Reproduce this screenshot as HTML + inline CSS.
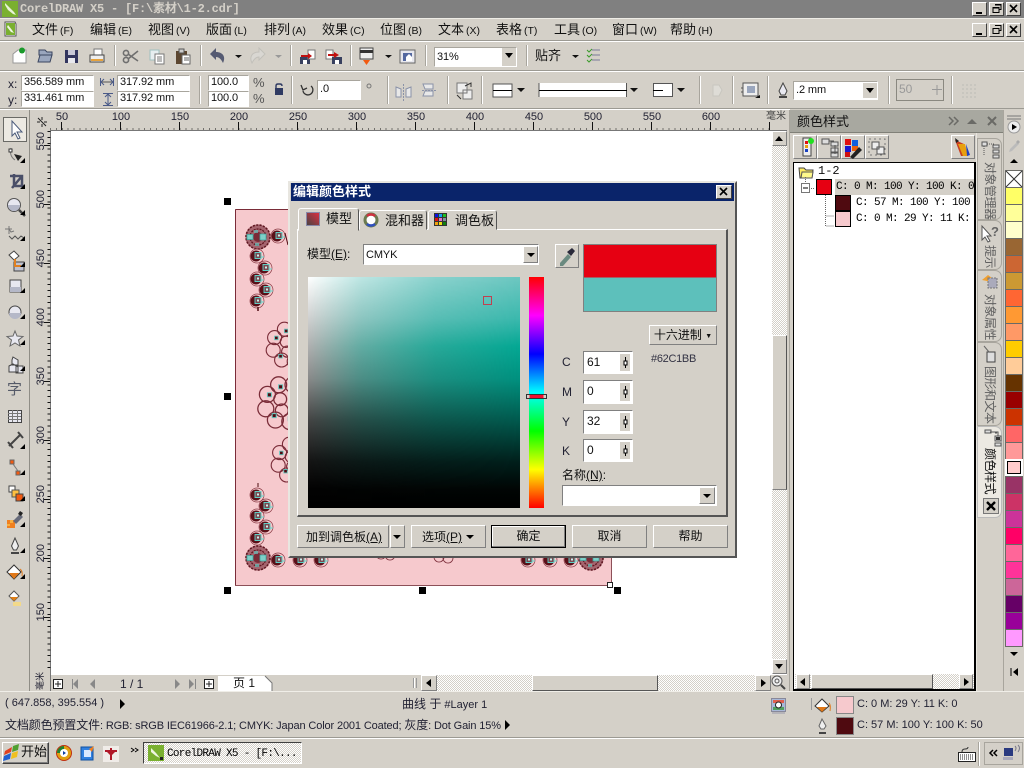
<!DOCTYPE html>
<html><head><meta charset="utf-8"><style>
html,body{margin:0;padding:0;width:1024px;height:768px;overflow:hidden;background:#d4d0c8}
body{position:relative;font-family:"Liberation Sans","Noto Sans CJK SC",sans-serif;font-size:11px;color:#111}
svg.o{position:absolute;left:0;top:0}
.t,.b,.s,.a{position:absolute;white-space:nowrap;box-sizing:border-box}
.t{line-height:1}
.m{font-size:13px;top:23px}.m i{font-style:normal;font-size:10.5px;margin-left:2px}
.b{background:#d4d0c8;border:1px solid;border-color:#fff #808080 #808080 #fff}
.s{background:#fff;border:1px solid;border-color:#a8a59d #fff #fff #a8a59d;font-size:11px;line-height:13px;padding-left:2px;letter-spacing:-.1px}
.w{position:absolute;width:15px;height:14px;background:#d4d0c8;border:1px solid;border-color:#fff #404040 #404040 #fff;box-sizing:border-box}
.d{position:absolute;background:conic-gradient(#fff 25%,#d4d0c8 0 50%,#fff 0 75%,#d4d0c8 0) 0 0/2px 2px}
.r{font-size:11px;top:112px;width:30px;text-align:center;color:#223}
.v{position:absolute;writing-mode:vertical-rl;text-orientation:sideways;font-size:11px;line-height:1;left:36px;color:#223;transform:rotate(180deg)}
.tab{position:absolute;left:977px;width:25px;border:1px solid #a8a59d;border-left-color:#a8a59d;border-radius:0 7px 7px 0;box-sizing:border-box;background:#d4d0c8}
.vt{position:absolute;left:983px;writing-mode:vertical-rl;text-orientation:sideways;font-size:12px;line-height:14px;color:#606060;letter-spacing:-.5px}
.c{font-size:11px;font-family:"Liberation Mono","Noto Sans CJK SC",monospace;letter-spacing:-.6px;color:#000}
.sb{font-size:11px;color:#223}.sb span{font-size:12px}
.n{font-size:12px;padding:4px 0 0 3px!important;border-color:#808080 #fff #fff #808080}
</style></head><body>

<div class="a" style="left:0;top:0;width:1024px;height:18px;background:#808080"></div>
<div class="t" style="left:20px;top:2px;font:bold 12px/14px 'Liberation Mono','Noto Sans CJK SC',monospace;color:#d4d0c8;letter-spacing:-.2px">CorelDRAW X5 - [F:\素材\1-2.cdr]</div>

<svg class="o" width="1024" height="768" viewBox="0 0 1024 768">
<defs>
<g id="n"><circle cx="-1" r="5.500" fill="#5a0f18"/><circle r="7" fill="none" stroke="#8a3a44" stroke-width=".7"/><path d="M-2-3.500h6v6h-6z" fill="#7a4850" stroke="#5fd0c6" stroke-width=".9"/><path d="M0-1.500h2v2H0z" fill="#c8f2ee"/><path d="M4 1h3" stroke="#62d8cc"/></g>
<g id="f"><circle r="12.500" fill="#a5646e"/><circle r="12" fill="none" stroke="#5f1620" stroke-width="1.600" stroke-dasharray="2 1.400"/><circle r="8" fill="none" stroke="#5f1620" stroke-width="1.300" stroke-dasharray="2 1"/><circle r="5" fill="#7a2a36"/><path d="M-11-2.500h6v5h-6zM2-3h6v6H2z" fill="#7fcfc8" stroke="#3fa8a0" stroke-width=".8"/><path d="M-4-7h4v3h-4zM-3 6h4v3h-4z" fill="#62c1bb" opacity=".7"/></g>
<g id="a" fill="none" stroke="#7a2c38" stroke-width=".8"><circle cx="-11" cy="-6" r="5"/><circle cx="-12" cy="3" r="5"/><circle cx="-6" cy="10" r="5"/><circle cx="3" cy="11" r="5"/><circle cx="-4" cy="-12" r="5"/><circle cx="5" cy="-12" r="5"/><circle cx="-3" cy="-3" r="4"/><circle cx="-2" cy="4" r="4"/><circle cx="11" cy="-6" r="5"/><circle cx="11" cy="5" r="5"/><path d="M-11-7h2.500v2.500h-2.500zM-4-12h2.500v2.500h-2.500zM5-2h2.500v2.500H5zM-8 6h2.500v2.500h-2.500zM2 8h2.500v2.500H2z" fill="#4f0a10" stroke="#62c8bf" stroke-width=".6"/></g>
</defs>

<!-- separators -->
<path d="M0 18.500h1024" stroke="#eeece6"/>
<path d="M0 40.500h1024M0 70.500h1024M0 108.500h1024" stroke="#9c9a93"/>
<path d="M0 41.500h1024M0 71.500h1024M0 109.500h790" stroke="#fff"/>

<!-- toolbar separators -->
<g stroke="#fff"><path d="M115.500 45v21M201.500 45v21M291.500 45v21M351.500 45v21M426.500 45v21M527.500 45v21"/>
<path d="M200.500 76v28M292.500 76v28M388.500 76v28M448.500 76v28M482.500 76v28M700.500 76v28M733.500 76v28M768.500 76v28M889.500 76v28M952.500 76v28"/></g>
<g stroke="#a8a59d"><path d="M114.500 45v21M200.500 45v21M290.500 45v21M350.500 45v21M425.500 45v21M526.500 45v21"/>
<path d="M199.500 76v28M291.500 76v28M387.500 76v28M447.500 76v28M481.500 76v28M699.500 76v28M732.500 76v28M767.500 76v28M888.500 76v28M951.500 76v28"/></g>

<!-- toolbar 1 icons -->
<path d="M13 54l5-4h8v13H13z" fill="#fff" stroke="#999"/><circle cx="22" cy="50.500" r="3" fill="#1a9a2a"/>
<path d="M39 50h6l2 2h5v3h-13zM38 62l2-7h12l-2 7z" fill="#9aa6bd" stroke="#3a4560"/>
<path d="M65 50h13v13H65z" fill="#33365f"/><path d="M68 50h7v5h-7z" fill="#c9c9d8"/><path d="M68 58h7v5h-7z" fill="#e8e8ee"/>
<path d="M94 49h8v6h-8z" fill="#fff" stroke="#777"/><path d="M90 55h14v7H90z" fill="#eee" stroke="#444"/><path d="M91 59h12v2H91z" fill="#e6a23c"/>
<g fill="none" stroke="#6f6f6f" stroke-width="1.600"><circle cx="126" cy="60" r="2.600"/><circle cx="126" cy="53" r="2.600"/><path d="M128 54l10 7M128 59l10-8"/></g>
<path d="M150 50h9v10h-9z" fill="#e6eef0" stroke="#9fc0bf"/><path d="M155 54h9v10h-9z" fill="#fff" stroke="#777"/><path d="M157 57h5M157 59h5M157 61h5" stroke="#777"/>
<path d="M176 51h11v13h-11z" fill="#5c4630"/><path d="M179 49h5v4h-5z" fill="#ccc" stroke="#555"/><path d="M182 55h8v9h-8z" fill="#fff" stroke="#666"/><path d="M184 58h5M184 60h5" stroke="#666"/>
<path d="M210 54l6-6v4c7 0 10 5 7 11-2-4-4-6-7-6v3z" fill="#555a72"/>
<path d="M235 55h7l-3.500 3z" fill="#111"/>
<path d="M265 54l-6-6v4c-7 0-10 5-7 11 2-4 4-6 7-6v3z" fill="#d9d7d2" stroke="#c2c0ba"/>
<path d="M275 55h7l-3.500 3z" fill="#999"/>
<path d="M300 57h10v7h-10z" fill="#38405f"/><path d="M303 60h4v4h-4z" fill="#fff"/><path d="M308 50h7v9h-7z" fill="#fff" stroke="#777"/><path d="M301 55h7v-2l4 3-4 3v-2h-7z" fill="#c01010"/>
<path d="M326 50h7v9h-7z" fill="#fff" stroke="#777"/><path d="M332 57h10v7h-10z" fill="#38405f"/><path d="M335 60h4v4h-4z" fill="#fff"/><path d="M328 54h6v-2l5 3-5 3v-2h-6z" fill="#c01010"/>
<path d="M360 48h13v11h-13z" fill="#eee" stroke="#444"/><path d="M360 50h13v3h-13z" fill="#333"/><path d="M363 60l3.500 5 3.500-5z" fill="#f25a10"/>
<path d="M385 55h7l-3.500 3z" fill="#111"/>
<path d="M400 50h15v13h-15z" fill="#e8e8ee" stroke="#666"/><path d="M403 53h9v8h-9z" fill="#5468a0"/><path d="M406 57l3-3 3 3v4h-6z" fill="#fff"/>
<path d="M572 55h7l-3.500 3z" fill="#111"/>
<path d="M592 50h8M592 55h8M592 60h8" stroke="#7a7a9a"/><path d="M587 50l2 2 3-3M587 55l2 2 3-3M587 60l2 2 3-3" fill="none" stroke="#3a9a2a"/>

<!-- toolbar 2 icons -->
<path d="M101 82h12" stroke="#555"/><path d="M104 79l-3 3 3 3M110 79l3 3-3 3M100.500 78v8M113.500 78v8" fill="none" stroke="#4a5a88"/>
<path d="M108 94v11M105 97l3-3 3 3M105 102l3 3 3-3M103 93.500h10M103 105.500h10" fill="none" stroke="#4a5a88"/>
<path d="M275 88h8v7h-8z" fill="#2f3a62"/><path d="M276 88v-2q0-2 2-2h2q2 0 2 2" fill="none" stroke="#2f3a62" stroke-width="1.400"/>
<path d="M311 86a5 5 0 1 1-8 5M301 85l2 5 4-2" fill="none" stroke="#333" stroke-width="1.300"/>
<circle cx="369" cy="86" r="2" fill="none" stroke="#777"/>
<g fill="#e8e8e8" stroke="#8a92a8"><path d="M396 87v10h5v-8zM411 87v10h-5v-8z"/><path d="M403.500 84v17" stroke-dasharray="2 1"/><path d="M423 84h10v5h-8zM423 96h10v-5h-8z"/><path d="M422 90.500h15" stroke-dasharray="2 1"/></g>
<path d="M457 83h10v10h-10zM463 90h9v9h-9z" fill="#eee" stroke="#777"/><path d="M465 86l6-3v4M457 95l4 4" fill="none" stroke="#333"/>
<path d="M493 84h19v13h-19z" fill="#fff" stroke="#555"/><path d="M493 90.500h19" stroke="#000"/>
<path d="M517 88h8l-4 4z" fill="#111"/>
<path d="M539 83h88v14h-88z" fill="#fff"/><path d="M539 83v14M626.500 83v14" stroke="#555"/><path d="M539 90.500h88" stroke="#000"/>
<path d="M630 88h8l-4 4z" fill="#111"/>
<path d="M653.500 83.500h19v13h-19z" fill="#fff" stroke="#555"/><path d="M653 90.500h10" stroke="#000"/>
<path d="M677 88h8l-4 4z" fill="#111"/>
<path d="M713 85h6l3 5-3 6h-6z" fill="#dedcd6" stroke="#c8c6bf"/>
<path d="M743 83h15v13h-15z" fill="#eee" stroke="#555"/><path d="M747 86h8v7h-8z" fill="#9aa6bd"/><path d="M743 88h-2M743 92h-2" stroke="#555"/><path d="M755 98l5-3v3z" fill="#111"/>
<path d="M783 83l-4 8 2 4h4l2-4z" fill="#e8e8f0" stroke="#444"/><path d="M779 96h8v2h-8z" fill="#444"/>
<path d="M896.500 79.500h47v21h-47z" fill="#d4d0c8" stroke="#8a8880"/><path d="M932 89.500h10M937 85v10" stroke="#999"/>
<g fill="#c8c6bf"><path d="M962 84h2v2h-2zM966 84h2v2h-2zM970 84h2v2h-2zM974 84h2v2h-2zM962 88h2v2h-2zM966 88h2v2h-2zM970 88h2v2h-2zM974 88h2v2h-2zM962 92h2v2h-2zM966 92h2v2h-2zM970 92h2v2h-2zM974 92h2v2h-2zM962 96h2v2h-2zM966 96h2v2h-2zM970 96h2v2h-2zM974 96h2v2h-2z"/></g>

<!-- canvas -->
<path d="M51 131h736v544H51z" fill="#fff"/>
<path d="M50.500 130v562" stroke="#777"/><path d="M50 130.500h737" stroke="#777"/>
<path d="M29.500 110v582" stroke="#8f8d86"/>
<path d="M235.500 209.500h376v376h-376z" fill="#f6c9cd" stroke="#8c5058"/>
<path d="M235.500 210v375M236 209.500h376" stroke="#7a2c38" fill="none"/>
<use href="#f" x="258" y="237"/><use href="#n" x="278" y="236"/><path d="M285 233l3 12" stroke="#4f0a10"/>
<use href="#n" x="257" y="256"/><use href="#n" x="265" y="268"/><use href="#n" x="257" y="279"/><use href="#n" x="266" y="290"/><use href="#n" x="257" y="301"/>
<path d="M258 307v4" stroke="#4f0a10" stroke-width="1.500"/>
<g transform="translate(290 346) scale(1.400)"><use href="#a"/></g><g transform="translate(285 404) scale(1.600)"><use href="#a"/></g><g transform="translate(295 461) scale(1.400)"><use href="#a"/></g>
<use href="#n" x="257" y="495"/><use href="#n" x="266" y="506"/><use href="#n" x="257" y="516"/><use href="#n" x="266" y="527"/><use href="#n" x="257" y="538"/>
<use href="#f" x="258" y="558"/><use href="#n" x="278" y="560"/><path d="M258 487v-4" stroke="#4f0a10"/>
<use href="#n" x="300" y="560"/><use href="#n" x="321" y="560"/>
<use href="#a" x="387" y="544"/><use href="#a" x="445" y="547"/>
<use href="#n" x="528" y="560"/><use href="#n" x="550" y="560"/><use href="#n" x="571" y="560"/><use href="#f" x="591" y="558"/>
<!-- handles -->
<path d="M224 198h7v7h-7zM224 393h7v7h-7zM224 587h7v7h-7zM419 587h7v7h-7zM614 587h7v7h-7z" fill="#000"/>
<path d="M607.500 582.500h5v5h-5z" fill="#fff" stroke="#222"/>

<!-- ruler ticks -->
<g stroke="#111" shape-rendering="crispEdges">
<path d="M50 129h722" stroke-dasharray="1 4.890"/>
<path d="M61.500 122v8M120.500 122v8M179.500 122v8M238.500 122v8M297.500 122v8M356.500 122v8M415.500 122v8M474.500 122v8M533.500 122v8M592.500 122v8M651.500 122v8M710.500 122v8M769.500 122v8"/>
<path d="M49 131v540" stroke-dasharray="1 4.890" stroke-width="3"/>
<path d="M44 145.500h6M44 204.500h6M44 263.500h6M44 322.500h6M44 381.500h6M44 440.500h6M44 499.500h6M44 558.500h6M44 617.500h6"/>
</g>
<path d="M42 117v3M42 124v3M37 122h3M44 122h3M38 118l8 8" stroke="#222" fill="none"/>

<!-- left toolbox icons -->
<path d="M3.500 117.500h23v24h-23z" fill="#ece9e2" stroke="#6a6a66"/>
<path d="M12 121v15l3-3 3 6 2-1-3-6h5z" fill="#fff" stroke="#4a5a7a"/>
<path d="M11 148q-2 8 4 12" fill="none" stroke="#777"/><path d="M9 149h3v3H9z" fill="#fff" stroke="#333"/><path d="M14 154l8 2-4 5z" fill="#222"/>
<path d="M10 176h12v10M14 174v12h10M12 188l10-12" fill="none" stroke="#4a4f68" stroke-width="2.500"/>
<circle cx="14" cy="205" r="6.500" fill="#e8e8f0" stroke="#555"/><path d="M8 205a6 6 0 0 0 12 0z" fill="#b5b8c8"/><path d="M19 210l6 6" stroke="#444" stroke-width="2.500"/>
<path d="M9 229l2 3 3-1M9 226v8M5 229h7" fill="none" stroke="#777"/><path d="M9 236l3 3 3-3 3 3 3-3 3 2" fill="none" stroke="#555"/>
<path d="M9 255l5-4 5 5-5 4z" fill="#fff" stroke="#444"/><path d="M14 262h10v9H14z" fill="#bfc2d0" stroke="#444"/><path d="M15 259v7h6" fill="none" stroke="#e08020" stroke-width="2"/>
<path d="M10 280h11v12H10z" fill="#e8e8f0" stroke="#444"/><path d="M10 287h11v5H10z" fill="#b5b8c8"/>
<circle cx="15" cy="312" r="6" fill="#e8e8f0" stroke="#444"/><path d="M9 313a6 6 0 0 0 12 0z" fill="#b5b8c8"/>
<path d="M15 331l2 5 6 .500-4.500 3.500 1.500 6-5-3-5 3 1.500-6L7 336.500l6-.500z" fill="#e8e8f0" stroke="#666"/>
<path d="M13 357l5 3v5h-6v-5zM9 366l4-2 5 3v5H9zM16 366h7v7h-7z" fill="#e8e8f0" stroke="#444"/>
<text x="7" y="394" font-size="15" font-family="'Noto Sans CJK SC',sans-serif" fill="#555a68">字</text>
<path d="M8.500 410.500h13v12h-13z" fill="#e8e8f0" stroke="#444"/><path d="M8 413.500h13M8 416.500h13M8 419.500h13M12.500 410v12M17.500 410v12" stroke="#777"/>
<path d="M9 446l12-12M8 442l5 6M18 432l5 6" stroke="#444" stroke-width="2"/>
<path d="M10 460h4v4h-4zM16 471h4v4h-4z" fill="#f25a10" stroke="#666"/><path d="M13 464l5 7" stroke="#777"/>
<path d="M9 486h6v6H9z" fill="#fff" stroke="#444"/><path d="M12 490h7v7h-7z" fill="#ffc040" stroke="#555"/><path d="M16 494h7v7h-7z" fill="#f25a10" stroke="#444"/>
<path d="M7 520h8v8H7z" fill="#f08020"/><path d="M10 520h3v3h-3zM7 524h3v2H7z" fill="#f8b040"/><path d="M13 521l7-7 3 3-7 7z" fill="#666a7a"/><path d="M20 511l3 2-2 3-3-2z" fill="#222"/>
<path d="M15 538l-3.500 8 2 4h3l2-4z" fill="#eee" stroke="#444"/><path d="M11 552h8v2h-8z" fill="#444"/>
<path d="M7 572l7-7 7 7-7 7z" fill="#fff" stroke="#333"/><path d="M9 573h10l-5 6z" fill="#e07818"/><path d="M20 569q3 2 2 7" fill="none" stroke="#e07818"/>
<path d="M9 596l5-5 5 5-5 5z" fill="#fff" stroke="#555"/><path d="M10 597h8l-4 4z" fill="#e08018"/><path d="M13 602h8v4h-8z" fill="#f2d98a"/>
<g fill="#000"><path d="M20 163l5-5v5zM20 189l5-5v5zM20 215l5-5v5zM20 241l5-5v5zM20 267l5-5v5zM20 293l5-5v5zM20 319l5-5v5zM20 345l5-5v5zM20 371l5-5v5zM20 449l5-5v5zM20 475l5-5v5zM20 501l5-5v5zM20 527l5-5v5zM20 553l5-5v5zM20 579l5-5v5z"/></g>

<!-- docker title -->
<path d="M790 110h214v22H790z" fill="#a8a8a0"/>
<path d="M790 132.500h214" stroke="#808078"/>
<path d="M949 117l4 4-4 4M954 117l4 4-4 4" fill="none" stroke="#6a6a66" stroke-width="1.500"/>
<path d="M967 124l5-5 5 5z" fill="#6a6a66"/>
<path d="M988 117l8 8M996 117l-8 8" stroke="#6a6a66" stroke-width="2"/>
<path d="M1003.500 110v582" stroke="#a8a59d"/><path d="M976.500 133v559" stroke="#e8e6e0"/>
<path d="M789.500 110v582" stroke="#a8a59d"/>
</svg>

<!-- window buttons -->
<div class="w" style="left:972px;top:2px"><svg width="13" height="12"><path d="M3 9h6v2H3z" fill="#000"/></svg></div>
<div class="w" style="left:989px;top:2px"><svg width="13" height="12"><path d="M5 1.500h6v5H9M3 4.500h6v5H3z" fill="none" stroke="#000"/><path d="M5 2h6M3 5h6" stroke="#000"/></svg></div>
<div class="w" style="left:1006px;top:2px"><svg width="13" height="12"><path d="M3 2l7 7M10 2l-7 7" stroke="#000" stroke-width="1.600"/></svg></div>
<div class="w" style="left:972px;top:23px"><svg width="13" height="12"><path d="M3 9h6v2H3z" fill="#000"/></svg></div>
<div class="w" style="left:989px;top:23px"><svg width="13" height="12"><path d="M5 1.500h6v5H9M3 4.500h6v5H3z" fill="none" stroke="#000"/></svg></div>
<div class="w" style="left:1006px;top:23px"><svg width="13" height="12"><path d="M3 2l7 7M10 2l-7 7" stroke="#000" stroke-width="1.600"/></svg></div>
<svg class="o" width="1024" height="50" style="pointer-events:none">
<path d="M2 1h16v16H2z" fill="#7ab030"/><path d="M5 3l4 4 5 5 2 3-3-1-5-4-3-5z" fill="#e8f2d8"/>
<path d="M5 22h10l1 2v12H5z" fill="#fff" stroke="#555"/><path d="M6 23h9v12H6z" fill="#7ab030"/><path d="M8 25l4 5 2 3-3-1-4-5z" fill="#eef5e0"/>
</svg>

<!-- menu -->
<div class="t m" style="left:32px">文件<i>(F)</i></div><div class="t m" style="left:90px">编辑<i>(E)</i></div>
<div class="t m" style="left:148px">视图<i>(V)</i></div><div class="t m" style="left:206px">版面<i>(L)</i></div>
<div class="t m" style="left:264px">排列<i>(A)</i></div><div class="t m" style="left:322px">效果<i>(C)</i></div>
<div class="t m" style="left:380px">位图<i>(B)</i></div><div class="t m" style="left:438px">文本<i>(X)</i></div>
<div class="t m" style="left:496px">表格<i>(T)</i></div><div class="t m" style="left:554px">工具<i>(O)</i></div>
<div class="t m" style="left:612px">窗口<i>(W)</i></div><div class="t m" style="left:670px">帮助<i>(H)</i></div>

<!-- toolbar inputs -->
<div class="s" style="left:434px;top:47px;width:83px;height:20px;padding-top:3px">31%</div>
<div class="b" style="left:502px;top:48px;width:14px;height:18px;border-color:#d4d0c8"></div>
<div class="t" style="left:505px;top:53px;width:0;height:0;border:4px solid transparent;border-top:5px solid #000;border-bottom:0"></div>
<div class="t" style="left:535px;top:49px;font-size:13px">贴齐</div>
<div class="t" style="left:8px;top:78px;font-size:12px;color:#223">x:</div><div class="t" style="left:8px;top:94px;font-size:12px;color:#223">y:</div>
<div class="s" style="left:21px;top:75px;width:73px;height:16px">356.589 mm</div>
<div class="s" style="left:21px;top:91px;width:73px;height:16px">331.461 mm</div>
<div class="s" style="left:117px;top:75px;width:73px;height:16px">317.92 mm</div>
<div class="s" style="left:117px;top:91px;width:73px;height:16px">317.92 mm</div>
<div class="s" style="left:208px;top:75px;width:41px;height:16px">100.0</div>
<div class="s" style="left:208px;top:91px;width:41px;height:16px">100.0</div>
<div class="t" style="left:253px;top:76px;font-size:13px;color:#555">%</div><div class="t" style="left:253px;top:92px;font-size:13px;color:#555">%</div>
<div class="s" style="left:317px;top:80px;width:44px;height:20px;padding-top:2px">.0</div>
<div class="s" style="left:793px;top:81px;width:85px;height:19px;padding-top:2px">.2 mm</div>
<div class="a" style="left:863px;top:83px;width:14px;height:15px;background:#d4d0c8"></div>
<div class="t" style="left:866px;top:88px;width:0;height:0;border:4px solid transparent;border-top:5px solid #000;border-bottom:0"></div>
<div class="t" style="left:899px;top:83px;font-size:12px;color:#999">50</div>

<!-- h ruler labels -->
<div class="t r" style="left:47px">50</div><div class="t r" style="left:106px">100</div><div class="t r" style="left:165px">150</div><div class="t r" style="left:224px">200</div><div class="t r" style="left:283px">250</div><div class="t r" style="left:342px">300</div><div class="t r" style="left:401px">350</div><div class="t r" style="left:460px">400</div><div class="t r" style="left:519px">450</div><div class="t r" style="left:578px">500</div><div class="t r" style="left:637px">550</div><div class="t r" style="left:696px">600</div>
<div class="t" style="left:766px;top:112px;font-size:10px;color:#444">毫米</div>
<div class="v" style="top:132px">550</div><div class="v" style="top:190px">500</div><div class="v" style="top:249px">450</div><div class="v" style="top:308px">400</div><div class="v" style="top:367px">350</div><div class="v" style="top:426px">300</div><div class="v" style="top:485px">250</div><div class="v" style="top:544px">200</div><div class="v" style="top:603px">150</div>
<div class="v" style="top:672px;font-size:9px">毫米</div>

<!-- canvas scrollbars -->
<div class="d" style="left:772px;top:131px;width:15px;height:530px"></div>
<div class="b" style="left:772px;top:131px;width:15px;height:15px"></div>
<div class="t" style="left:775px;top:136px;width:0;height:0;border:4px solid transparent;border-bottom:5px solid #000;border-top:0"></div>
<div class="b" style="left:772px;top:335px;width:15px;height:155px;border-right-color:#555"></div>
<div class="b" style="left:772px;top:659px;width:15px;height:15px"></div>
<div class="t" style="left:775px;top:664px;width:0;height:0;border:4px solid transparent;border-top:5px solid #000;border-bottom:0"></div>
<div class="a" style="left:51px;top:675px;width:736px;height:17px;background:#d4d0c8"></div>
<div class="d" style="left:437px;top:675px;width:318px;height:16px"></div>
<div class="b" style="left:421px;top:675px;width:16px;height:16px"></div>
<div class="t" style="left:426px;top:679px;width:0;height:0;border:4px solid transparent;border-right:5px solid #000;border-left:0"></div>
<div class="b" style="left:532px;top:675px;width:126px;height:16px;border-bottom-color:#555;border-right-color:#555"></div>
<div class="b" style="left:755px;top:675px;width:16px;height:16px"></div>
<div class="t" style="left:761px;top:679px;width:0;height:0;border:4px solid transparent;border-left:5px solid #000;border-right:0"></div>
<svg class="o" width="1024" height="768" style="pointer-events:none">
<path d="M53.500 679.500h9v9h-9zM204.500 679.500h9v9h-9z" fill="#fff" stroke="#222"/><path d="M58 681v6M55 684h6M209 681v6M206 684h6" stroke="#222"/>
<path d="M72 679h1v10h-1zM78 679v10l-5-5zM95 679v10l-5-5zM175 679v10l5-5zM189 679v10l5-5zM195 679h1v10h-1z" fill="#888"/>
<path d="M218 676h47l7 7v9h-54z" fill="#fff"/><path d="M265 676l7 7v9" fill="none" stroke="#777"/>
<path d="M413.500 678v10M416.500 678v10" stroke="#999"/><path d="M414.500 678v10" stroke="#fff"/>
<circle cx="777" cy="681" r="5" fill="#eee" stroke="#555"/><circle cx="777" cy="681" r="2" fill="none" stroke="#555"/><path d="M781 685l4 4" stroke="#444" stroke-width="2"/>
</svg>
<div class="t" style="left:120px;top:678px;font-size:12px;color:#223">1 / 1</div>
<div class="t" style="left:233px;top:677px;font-size:12px">页 1</div>

<!-- docker -->
<div class="t" style="left:797px;top:115px;font-size:13px;color:#111">颜色样式</div>
<div class="b" style="left:793px;top:135px;width:24px;height:24px"></div><div class="b" style="left:817px;top:135px;width:24px;height:24px"></div><div class="b" style="left:841px;top:135px;width:24px;height:24px"></div><div class="b" style="left:865px;top:135px;width:24px;height:24px"></div><div class="b" style="left:951px;top:135px;width:24px;height:24px"></div>
<div class="a" style="left:793px;top:162px;width:183px;height:529px;background:#fff;border:1px solid #000;border-bottom-width:2px;border-right-width:2px"></div>
<div class="a" style="left:835px;top:179px;width:139px;height:16px;background:#d4d0c8"></div>
<svg class="o" width="1024" height="768" style="pointer-events:none">
<path d="M803 138h8v18h-8z" fill="#eee" stroke="#444"/><path d="M805 141h3v3h-3z" fill="#e01010"/><path d="M805 145h3v3h-3z" fill="#e8a010"/><path d="M805 149h3v3h-3z" fill="#1840c0"/><circle cx="811" cy="141" r="3" fill="#20e020"/>
<path d="M822 139h7v5h-7zM831 142h7v4h-7zM831 148h7v4h-7zM831 153h7v4h-7z" fill="#ddd" stroke="#555"/><path d="M829 141h5M835 145v9" stroke="#555"/>
<path d="M845 139h6v6h-6z" fill="#e01010"/><path d="M852 140h6v6h-6z" fill="#1060e0"/><path d="M845 146h6v6h-6z" fill="#1818d0"/><path d="M852 146h6v5h-6z" fill="#e86010"/><path d="M845 152h5v5h-5z" fill="#d01010"/><path d="M850 157l9-10 3 3-9 9z" fill="#222"/>
<path d="M869 139h16v16h-16z" fill="none" stroke="#777" stroke-dasharray="2 3"/><path d="M872 142h7v7h-7zM877 147h7v7h-7z" fill="#eee" stroke="#555"/>
<path d="M955 140l9 4v12l-3 0z" fill="#c84020"/><path d="M958 144l5 12h5l-3-12z" fill="#e8a010"/><path d="M966 144l4 11-3 1z" fill="#2040c0"/><path d="M955 138l4 3-3 2z" fill="#222"/>
<path d="M799 168h5l2 2h7l-1 8h-12z" fill="#ffec60" stroke="#444"/><path d="M802 172h11l-1 6h-11z" fill="#fff98a" stroke="#555"/>
<path d="M805.500 177v8M811 188.500h4M825.500 195v21h9M825.500 211v15h9" fill="none" stroke="#666" stroke-dasharray="1 1"/>
<path d="M801.500 183.500h8v9h-8z" fill="#fff" stroke="#777"/><path d="M803 188h5" stroke="#000"/>
<path d="M816.500 179.500h15v15h-15z" fill="#e60012" stroke="#000"/>
<path d="M835.500 195.500h15v15h-15z" fill="#4f0a10" stroke="#000"/>
<path d="M835.500 211.500h15v15h-15z" fill="#f6c9cd" stroke="#000"/>
</svg>
<div class="t" style="left:818px;top:164px;font:12px/14px 'Liberation Mono',monospace">1-2</div>
<div class="a" style="left:835px;top:179px;width:139px;height:16px;overflow:hidden"><span class="t c" style="left:1px;top:3px">C: 0 M: 100 Y: 100 K: 0</span></div>
<div class="t c" style="left:856px;top:198px">C: 57 M: 100 Y: 100</div>
<div class="t c" style="left:856px;top:214px">C: 0 M: 29 Y: 11 K:</div>
<div class="d" style="left:795px;top:674px;width:179px;height:15px"></div>
<div class="b" style="left:796px;top:674px;width:14px;height:15px"></div>
<div class="t" style="left:800px;top:678px;width:0;height:0;border:4px solid transparent;border-right:5px solid #000;border-left:0"></div>
<div class="b" style="left:811px;top:674px;width:122px;height:15px;border-right-color:#555;border-bottom-color:#555"></div>
<div class="b" style="left:959px;top:674px;width:14px;height:15px"></div>
<div class="t" style="left:964px;top:678px;width:0;height:0;border:4px solid transparent;border-left:5px solid #000;border-right:0"></div>

<!-- tabs -->
<div class="tab" style="top:138px;height:82px"></div><div class="tab" style="top:220px;height:50px"></div><div class="tab" style="top:270px;height:72px"></div><div class="tab" style="top:342px;height:84px"></div>
<div class="tab" style="top:426px;height:92px;background:#ece9e2;border-color:#bbb"></div>
<div class="vt" style="top:162px">对象管理器</div><div class="vt" style="top:245px">提示</div><div class="vt" style="top:294px">对象属性</div><div class="vt" style="top:366px">图形和文本</div>
<div class="vt" style="top:448px;color:#111">颜色样式</div>
<svg class="o" width="1024" height="768" style="pointer-events:none">
<path d="M982 142h5v4h-5zM993 145h6v3h-6zM993 150h6v3h-6zM993 155h6v3h-6z" fill="#ddd" stroke="#555"/><path d="M984 146v10M987 144h8" stroke="#555" stroke-dasharray="1 1"/>
<path d="M982 226v14l3-3 3 5 2-1-3-5h4z" fill="#fff" stroke="#555"/>
<text x="991" y="236" font-size="13" font-weight="bold" fill="#666" font-family="Liberation Sans">?</text>
<path d="M982 280l6-5 4 3v4z" fill="#f0a030"/><path d="M988 278h9v10h-9z" fill="#aab" stroke="#777" stroke-dasharray="2 1"/>
<path d="M987 352h8v10h-8z" fill="#ddd" stroke="#444"/><path d="M984 346l5 6" stroke="#666"/>
<path d="M985 430h6v3h-6zM997 433h-2M995 436h6v5h-6zM995 443h6v3h-6z" fill="#ddd" stroke="#555"/><path d="M990 432h8v4" fill="none" stroke="#555"/><path d="M996 437h4v3h-4z" fill="#333"/>
<path d="M983.500 498.500h15v15h-15z" fill="#d4d0c8" stroke="#777"/><path d="M987 502l8 8M995 502l-8 8" stroke="#000" stroke-width="2.400"/>
<!-- palette head -->
<path d="M1007 116h14M1007 119h14" stroke="#777"/>
<circle cx="1014" cy="127" r="6" fill="#eee" stroke="#999"/><path d="M1012 124v6l5-3z" fill="#000"/>
<path d="M1010 149l7-7 2 2-7 7-3 1z" fill="#bbb"/><path d="M1016 142l2-2 2 2-2 2z" fill="#aaa"/>
<path d="M1010 163l4-4 4 4z" fill="#000"/>
<path d="M1010 652l4 4 4-4z" fill="#000"/>
<path d="M1011 668v8" stroke="#000"/><path d="M1018 668v8l-5-4z" fill="#000"/>
<!-- palette -->
<g stroke="#6a6a66" stroke-width="1">
<path d="M1005.500 170.500h17v17h-17z" fill="#fff"/><path d="M1006 171l16 16M1022 171l-16 16" stroke="#333"/>
<path d="M1005.500 187.500h17v17h-17z" fill="#ffff66"/><path d="M1005.500 204.500h17v17h-17z" fill="#ffff99"/><path d="M1005.500 221.500h17v17h-17z" fill="#ffffcc"/><path d="M1005.500 238.500h17v17h-17z" fill="#996633"/><path d="M1005.500 255.500h17v17h-17z" fill="#cc6633"/><path d="M1005.500 272.500h17v17h-17z" fill="#cc9933"/><path d="M1005.500 289.500h17v17h-17z" fill="#ff6633"/><path d="M1005.500 306.500h17v17h-17z" fill="#ff9933"/><path d="M1005.500 323.500h17v17h-17z" fill="#ff9966"/><path d="M1005.500 340.500h17v17h-17z" fill="#ffcc00"/><path d="M1005.500 357.500h17v17h-17z" fill="#ffcc99"/><path d="M1005.500 374.500h17v17h-17z" fill="#663300"/><path d="M1005.500 391.500h17v17h-17z" fill="#990000"/><path d="M1005.500 408.500h17v17h-17z" fill="#cc3300"/><path d="M1005.500 425.500h17v17h-17z" fill="#ff6666"/><path d="M1005.500 442.500h17v17h-17z" fill="#ff9999"/>
<path d="M1005.500 476.500h17v17h-17z" fill="#993366"/><path d="M1005.500 493.500h17v17h-17z" fill="#cc3366"/><path d="M1005.500 510.500h17v17h-17z" fill="#cc3399"/><path d="M1005.500 527.500h17v17h-17z" fill="#ff0066"/><path d="M1005.500 544.500h17v17h-17z" fill="#ff6699"/><path d="M1005.500 561.500h17v17h-17z" fill="#ff3399"/><path d="M1005.500 578.500h17v17h-17z" fill="#cc6699"/><path d="M1005.500 595.500h17v17h-17z" fill="#660066"/><path d="M1005.500 612.500h17v17h-17z" fill="#990099"/><path d="M1005.500 629.500h17v17h-17z" fill="#ff99ff"/>
</g>
<path d="M1005 459h18v17h-18z" fill="#fff"/><path d="M1007.500 461.500h13v12h-13z" fill="#ffcccc" stroke="#000"/>
</svg>

<!-- dialog -->
<div class="a" style="left:288px;top:181px;width:449px;height:377px;background:#d4d0c8;border:2px solid;border-color:#e8e6e0 #555 #555 #e8e6e0"></div>
<div class="a" style="left:291px;top:183px;width:443px;height:18px;background:#0a246a"></div>
<div class="t" style="left:293px;top:185px;font-size:13px;font-weight:bold;color:#fff">编辑颜色样式</div>
<div class="w" style="left:716px;top:185px;width:16px;height:14px"><svg width="14" height="12"><path d="M3 2l7 7M10 2l-7 7" stroke="#000" stroke-width="1.600"/></svg></div>
<div class="a" style="left:297px;top:229px;width:431px;height:288px;border:1px solid;border-width:1px 2px 2px 1px;border-color:#fff #555 #555 #fff"></div>
<div class="a" style="left:359px;top:210px;width:68px;height:20px;border:1px solid;border-color:#fff #555 #d4d0c8 #fff;border-radius:3px 3px 0 0;background:#d4d0c8"></div>
<div class="a" style="left:428px;top:210px;width:69px;height:20px;border:1px solid;border-color:#fff #555 #d4d0c8 #fff;border-radius:3px 3px 0 0;background:#d4d0c8"></div>
<div class="a" style="left:298px;top:208px;width:61px;height:23px;border:1px solid;border-color:#fff #555 #d4d0c8 #fff;border-radius:3px 3px 0 0;background:#d4d0c8"></div>
<svg class="o" width="1024" height="768" style="pointer-events:none">
<defs><linearGradient id="g1" x1="0" y1="1" x2="1" y2="0"><stop offset="0" stop-color="#444"/><stop offset="1" stop-color="#e03040"/></linearGradient></defs>
<path d="M306.500 212.500h13v13h-13z" fill="url(#g1)" stroke="#8888a8"/>
<circle cx="371" cy="220" r="6" fill="#fff" stroke="#6a7a50" stroke-width="3"/><path d="M367 216a6 6 0 0 1 8 0" fill="none" stroke="#d03040" stroke-width="2.500"/><path d="M375 224a6 6 0 0 1-8 0" fill="none" stroke="#3050c0" stroke-width="2.500"/>
<path d="M434 213h13v13h-13z" fill="#333"/><path d="M435 214h3v3h-3z" fill="#1010e0"/><path d="M439 214h3v3h-3z" fill="#10a0f0"/><path d="M443 214h3v3h-3z" fill="#20c020"/><path d="M435 218h3v3h-3z" fill="#e01010"/><path d="M439 218h3v3h-3z" fill="#e070d0"/><path d="M443 218h3v3h-3z" fill="#8090a0"/><path d="M435 222h3v3h-3z" fill="#f0a010"/><path d="M439 222h3v3h-3z" fill="#f0e010"/><path d="M443 222h3v3h-3z" fill="#108010"/>
</svg>
<div class="t" style="left:326px;top:212px;font-size:13px">模型</div><div class="t" style="left:385px;top:214px;font-size:13px">混和器</div><div class="t" style="left:455px;top:214px;font-size:13px">调色板</div>
<div class="t" style="left:307px;top:248px;font-size:12px">模型<u>(E)</u>:</div>
<div class="s" style="left:363px;top:244px;width:176px;height:21px;border-color:#808080 #fff #fff #808080;padding-top:4px;font-size:11px">CMYK</div>
<div class="b" style="left:523px;top:246px;width:15px;height:17px"></div>
<div class="t" style="left:527px;top:253px;width:0;height:0;border:4px solid transparent;border-top:4px solid #000;border-bottom:0"></div>
<div class="b" style="left:555px;top:244px;width:24px;height:24px"></div>
<svg class="o" width="1024" height="768" style="pointer-events:none"><path d="M560 263l8-9 3 3-8 9-3 0z" fill="#6a8a80"/><path d="M567 252l5-4 3 3-4 5z" fill="#2a2a3a"/></svg>
<div class="a" style="left:583px;top:244px;width:134px;height:68px;border:1px solid #808080;background:linear-gradient(#e60012 0 49%,#5dc0bb 49% 100%)"></div>

<div class="a" style="left:308px;top:277px;width:212px;height:231px;background:linear-gradient(#6dc7c1 0%,#3bb9ae 18%,#05a894 30%,#00917f 44%,#005a4e 62%,#00201c 80%,#020605 92%,#000 100%)"></div>
<div class="a" style="left:308px;top:277px;width:212px;height:231px;background:linear-gradient(#fff 0%,#b5b5b5 28%,#8a8a8a 44%,#444 62%,#141414 80%,#020202 92%,#000 100%);-webkit-mask-image:linear-gradient(to right,#000 0,rgba(0,0,0,.55) 25%,rgba(0,0,0,.2) 60%,transparent 100%);mask-image:linear-gradient(to right,#000 0,rgba(0,0,0,.55) 25%,rgba(0,0,0,.2) 60%,transparent 100%)"></div>
<div class="a" style="left:483px;top:296px;width:9px;height:9px;border:1px solid #c04050"></div>
<div class="a" style="left:529px;top:277px;width:15px;height:231px;background:linear-gradient(#f00,#f0f 16.67%,#00f 33.33%,#0ff 50%,#0f0 66.67%,#ff0 83.33%,#f00)"></div>
<div class="a" style="left:526px;top:394px;width:21px;height:5px;border:1px solid #333;background:linear-gradient(90deg,#d4d0c8 0 14%,#f01030 14% 86%,#d4d0c8 86%)"></div>

<div class="b" style="left:649px;top:325px;width:68px;height:20px;font-size:12px;line-height:18px;text-align:center">十六进制 <span style="font-size:7px;vertical-align:1px">▼</span></div>
<div class="t" style="left:651px;top:354px;font-size:11px;color:#334;letter-spacing:-.3px">#62C1BB</div>
<div class="t" style="left:562px;top:356px;font-size:12px;color:#223">C</div><div class="t" style="left:562px;top:386px;font-size:12px;color:#223">M</div><div class="t" style="left:562px;top:416px;font-size:12px;color:#223">Y</div><div class="t" style="left:562px;top:445px;font-size:12px;color:#223">K</div>
<div class="s n" style="left:583px;top:351px;width:50px;height:23px">61</div>
<div class="s n" style="left:583px;top:380px;width:50px;height:24px">0</div>
<div class="s n" style="left:583px;top:410px;width:50px;height:24px">32</div>
<div class="s n" style="left:583px;top:439px;width:50px;height:23px">0</div>
<div class="a" style="left:620px;top:354px;width:10px;height:17px;background:#d4d0c8"></div><div class="a" style="left:620px;top:383px;width:10px;height:18px;background:#d4d0c8"></div><div class="a" style="left:620px;top:413px;width:10px;height:18px;background:#d4d0c8"></div><div class="a" style="left:620px;top:442px;width:10px;height:17px;background:#d4d0c8"></div>
<svg class="o" width="1024" height="768" style="pointer-events:none">
<path d="M625.500 357v11M625.500 386v12M625.500 416v12M625.500 445v11" stroke="#000"/><path d="M624 361h3v4h-3zM624 390h3v4h-3zM624 420h3v4h-3zM624 449h3v4h-3z" fill="#fff" stroke="#000"/>
</svg>
<div class="t" style="left:562px;top:469px;font-size:12px">名称<u>(N)</u>:</div>
<div class="s" style="left:562px;top:485px;width:155px;height:21px;border-color:#808080 #fff #fff #808080"></div>
<div class="b" style="left:699px;top:487px;width:16px;height:17px"></div>
<div class="t" style="left:703px;top:494px;width:0;height:0;border:4px solid transparent;border-top:4px solid #000;border-bottom:0"></div>
<div class="b" style="left:297px;top:525px;width:92px;height:23px;font-size:12px;line-height:22px;padding-left:8px">加到调色板<u>(A)</u></div>
<div class="b" style="left:390px;top:525px;width:15px;height:23px"></div>
<div class="t" style="left:393px;top:535px;width:0;height:0;border:4px solid transparent;border-top:4px solid #000;border-bottom:0"></div>
<div class="b" style="left:411px;top:525px;width:75px;height:23px;font-size:12px;line-height:22px;padding-left:10px">选项<u>(P)</u></div>
<div class="t" style="left:466px;top:535px;width:0;height:0;border:4px solid transparent;border-top:4px solid #000;border-bottom:0"></div>
<div class="b" style="left:491px;top:525px;width:75px;height:23px;font-size:12px;line-height:20px;text-align:center;border:1px solid #000;box-shadow:inset -1px -1px 0 #808080,inset 1px 1px 0 #fff">确定</div>
<div class="b" style="left:572px;top:525px;width:75px;height:23px;font-size:12px;line-height:21px;text-align:center">取消</div>
<div class="b" style="left:653px;top:525px;width:75px;height:23px;font-size:12px;line-height:21px;text-align:center">帮助</div>

<!-- status -->
<svg class="o" width="1024" height="768" style="pointer-events:none">
<path d="M0 691.500h1024" stroke="#f0eee8"/>
<path d="M0 737.500h1024" stroke="#9c9a93"/><path d="M0 738.500h1024" stroke="#fff"/>
<path d="M120 699v10l5-5zM505 720v10l5-5z" fill="#000"/>
<path d="M771.500 698.500h14v13h-14z" fill="#a8b8d8" stroke="#889"/><path d="M773 700h11v3h-11z" fill="#e06050"/><path d="M773 707h11v3h-11z" fill="#50a060"/><circle cx="778.500" cy="705" r="3" fill="#fff" stroke="#222"/><path d="M772 713h13" stroke="#99a"/>
<path d="M811.500 698v12" stroke="#999"/>
<path d="M815 706l7-7 7 7-7 6z" fill="#fff" stroke="#333"/><path d="M817 707h10l-5 5z" fill="#e07818"/><path d="M829 703q2 2 1 8" fill="none" stroke="#e07818"/>
<path d="M822 719l-3 7 2 3h3l2-3z" fill="#eee" stroke="#666"/><path d="M819 732h7v2h-7z" fill="#444"/>
<path d="M836.500 696.500h17v17h-17z" fill="#f6c9cd" stroke="#888"/>
<path d="M836.500 717.500h17v17h-17z" fill="#4f0a10" stroke="#888"/>
<!-- start flag -->
<path d="M5 751l7-4-1 5-7 3z" fill="#e04020"/><path d="M13 746l6-2-1 6-6 2z" fill="#50a030"/><path d="M4 756l7-3-1 6-7 2z" fill="#2060d0"/><path d="M12 753l6-2-1 6-6 2z" fill="#f0c020"/>
<circle cx="64" cy="753" r="7.500" fill="#e0a010" stroke="#c03010"/><path d="M57 753a7 7 0 0 1 7-7v7z" fill="#208030"/><circle cx="64" cy="753" r="4" fill="#fff"/><path d="M63 751l3 2-3 2z" fill="#1040a0"/>
<path d="M81 747h12v13H81z" fill="#3080e0" stroke="#1050a0"/><path d="M84 750h7v7h-7z" fill="#d8e8ff"/><path d="M89 749l5-3-2 6z" fill="#f08020"/>
<path d="M103 746h16v16h-16z" fill="#f0ece8"/><path d="M105 750h12v2h-12z" fill="#b01828"/><path d="M110 748h2v12h-2z" fill="#b01828"/><path d="M107 752l4 4 4-4z" fill="#b01828"/>
<path d="M131 748l3 2-3 2M135 748l3 2-3 2" fill="none" stroke="#000"/>
<!-- keyboard -->
<path d="M958.500 752.500h17v9h-17z" fill="#fff" stroke="#222"/><path d="M960 755h14M960 757h14M960 759h14" stroke="#222" stroke-dasharray="1 1"/><path d="M962 752q0-3 3-3t3-2" fill="none" stroke="#333"/>
<path d="M978.500 742v24" stroke="#a8a59d"/><path d="M979.500 742v24" stroke="#fff"/>
<path d="M984.500 742.500h38v22h-38z" fill="none" stroke="#a8a59d"/>
<path d="M993 750l-3 3 3 3M997 750l-3 3 3 3" fill="none" stroke="#000" stroke-width="1.500"/>
<path d="M1004 748h9v8h-9z" fill="#2a3a80"/><path d="M1003 757h10v3h-10z" fill="#aab"/><path d="M1015 746q2 2 0 5M1018 745q3 3 0 7" fill="none" stroke="#778"/>
</svg>
<div class="t sb" style="left:5px;top:698px">( 647.858, 395.554 )</div>
<div class="t sb" style="left:402px;top:698px"><span>曲线 于</span> #Layer 1</div>
<div class="t sb" style="left:5px;top:719px;letter-spacing:-.13px"><span>文档颜色预置文件</span>: RGB: sRGB IEC61966-2.1; CMYK: Japan Color 2001 Coated; <span>灰度</span>: Dot Gain 15%</div>
<div class="t sb" style="left:857px;top:699px">C: 0 M: 29 Y: 11 K: 0</div>
<div class="t sb" style="left:857px;top:720px">C: 57 M: 100 Y: 100 K: 50</div>

<!-- taskbar -->
<div class="a" style="left:2px;top:742px;width:47px;height:22px;border:1px solid;border-color:#fff #404040 #404040 #fff;box-shadow:inset -1px -1px 0 #808080"></div>
<div class="t" style="left:21px;top:745px;font-size:13px">开始</div>
<div class="a" style="left:143px;top:742px;width:159px;height:22px;background:conic-gradient(#fff 25%,#d4d0c8 0 50%,#fff 0 75%,#d4d0c8 0) 0 0/2px 2px;border:1px solid;border-color:#404040 #fff #fff #404040"></div>
<svg class="o" width="1024" height="768" style="pointer-events:none"><path d="M148 745h16v16h-16z" fill="#7ab030"/><path d="M151 748l5 5 4 5-4-2-5-4z" fill="#eef5e0"/><path d="M160 757h3v3h-3z" fill="#222"/></svg>
<div class="t" style="left:167px;top:747px;font:11px/14px 'Liberation Mono',monospace;color:#000;letter-spacing:-.7px">CorelDRAW X5 - [F:\...</div>

</body></html>
